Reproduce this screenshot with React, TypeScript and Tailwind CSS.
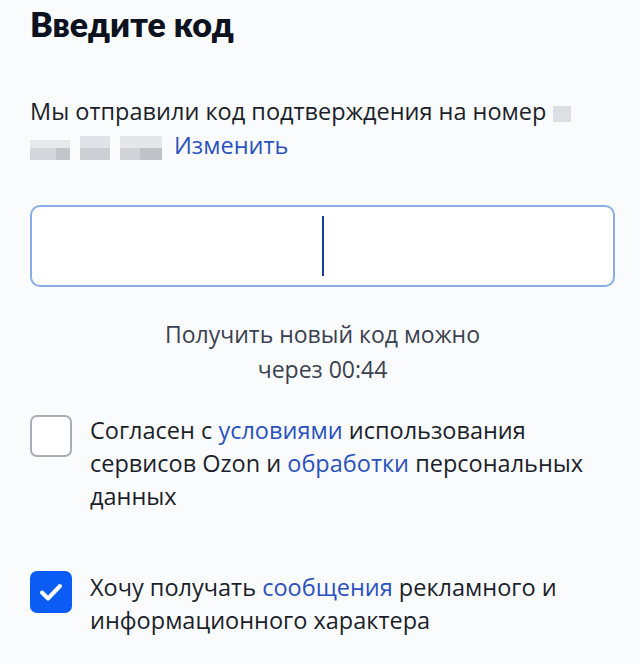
import React from 'react';

const Mosaic: React.FC = () => (
  <span className="inline-flex items-end gap-[10px] align-middle mr-[12px]">
    <span className="inline-flex flex-col">
      <span className="block w-[40px] h-[8px] bg-[#e6e8ec]"></span>
      <span className="flex">
        <span className="block w-[26px] h-[12px] bg-[#d3d6db]"></span>
        <span className="block w-[14px] h-[12px] bg-[#c2c5ca]"></span>
      </span>
    </span>
    <span className="inline-flex flex-col">
      <span className="block w-[30px] h-[12px] bg-[#dfe2e6]"></span>
      <span className="block w-[30px] h-[12px] bg-[#cbced3]"></span>
    </span>
    <span className="inline-flex flex-col">
      <span className="block w-[42px] h-[12px] bg-[#e4e6ea]"></span>
      <span className="flex">
        <span className="block w-[20px] h-[12px] bg-[#d0d3d8]"></span>
        <span className="block w-[22px] h-[12px] bg-[#bfc2c7]"></span>
      </span>
    </span>
  </span>
);

const App: React.FC = () => {
  return (
    <div className="w-[640px] h-[664px] bg-[#fafbfd] overflow-hidden font-['Open_Sans','Noto_Sans',sans-serif] text-[#1b1f2a]">
      <div className="pl-[30px] pr-[25px] pt-[2px]">
        <h1 className="text-[34px] font-extrabold leading-[44px] text-[#0b1220] font-['Lato',sans-serif]">Введите код</h1>

        <p className="mt-[48px] text-[23.5px] leading-[34px] text-[#1b1f2a] whitespace-nowrap">
          Мы отправили код подтверждения на номер{' '}
          <span className="inline-block align-middle w-[18px] h-[16px] bg-[#dcdfe3]"></span>
          <br />
          <Mosaic />
          <a className="text-[#2a52bd]">Изменить</a>
        </p>

        <div className="mt-[43px] h-[82px] rounded-[10px] border-2 border-[#86aee4] bg-white flex items-center justify-center">
          <span className="block w-[2px] h-[60px] bg-[#1a3a8a]"></span>
        </div>

        <p className="mt-[30px] text-center text-[23px] leading-[35px] text-[#3a4150]">
          Получить новый код можно
          <br />
          через 00:44
        </p>

        <div className="mt-[25px] flex gap-[18px]">
          <span className="shrink-0 mt-[3px] w-[42px] h-[42px] rounded-[7px] border-2 border-[#a9adb5] bg-white"></span>
          <p className="mt-[2px] text-[23.5px] leading-[33px] text-[#1b1f2a] whitespace-nowrap">
            Согласен с <a className="text-[#2a52bd]">условиями</a> использования
            <br />
            сервисов Ozon и <a className="text-[#2a52bd]">обработки</a> персональных
            <br />
            данных
          </p>
        </div>

        <div className="mt-[56px] flex gap-[18px]">
          <span className="shrink-0 mt-[2px] w-[42px] h-[42px] rounded-[7px] bg-[#0a5cf5] flex items-center justify-center">
            <svg width="26" height="22" viewBox="0 0 26 22" fill="none">
              <path d="M4 11.5l6 6L22 5" stroke="white" strokeWidth="4" strokeLinecap="round" strokeLinejoin="round" />
            </svg>
          </span>
          <p className="mt-[2px] text-[23.5px] leading-[33px] text-[#1b1f2a] whitespace-nowrap">
            Хочу получать <a className="text-[#2a52bd]">сообщения</a> рекламного и
            <br />
            информационного характера
          </p>
        </div>
      </div>
    </div>
  );
};

export default App;
